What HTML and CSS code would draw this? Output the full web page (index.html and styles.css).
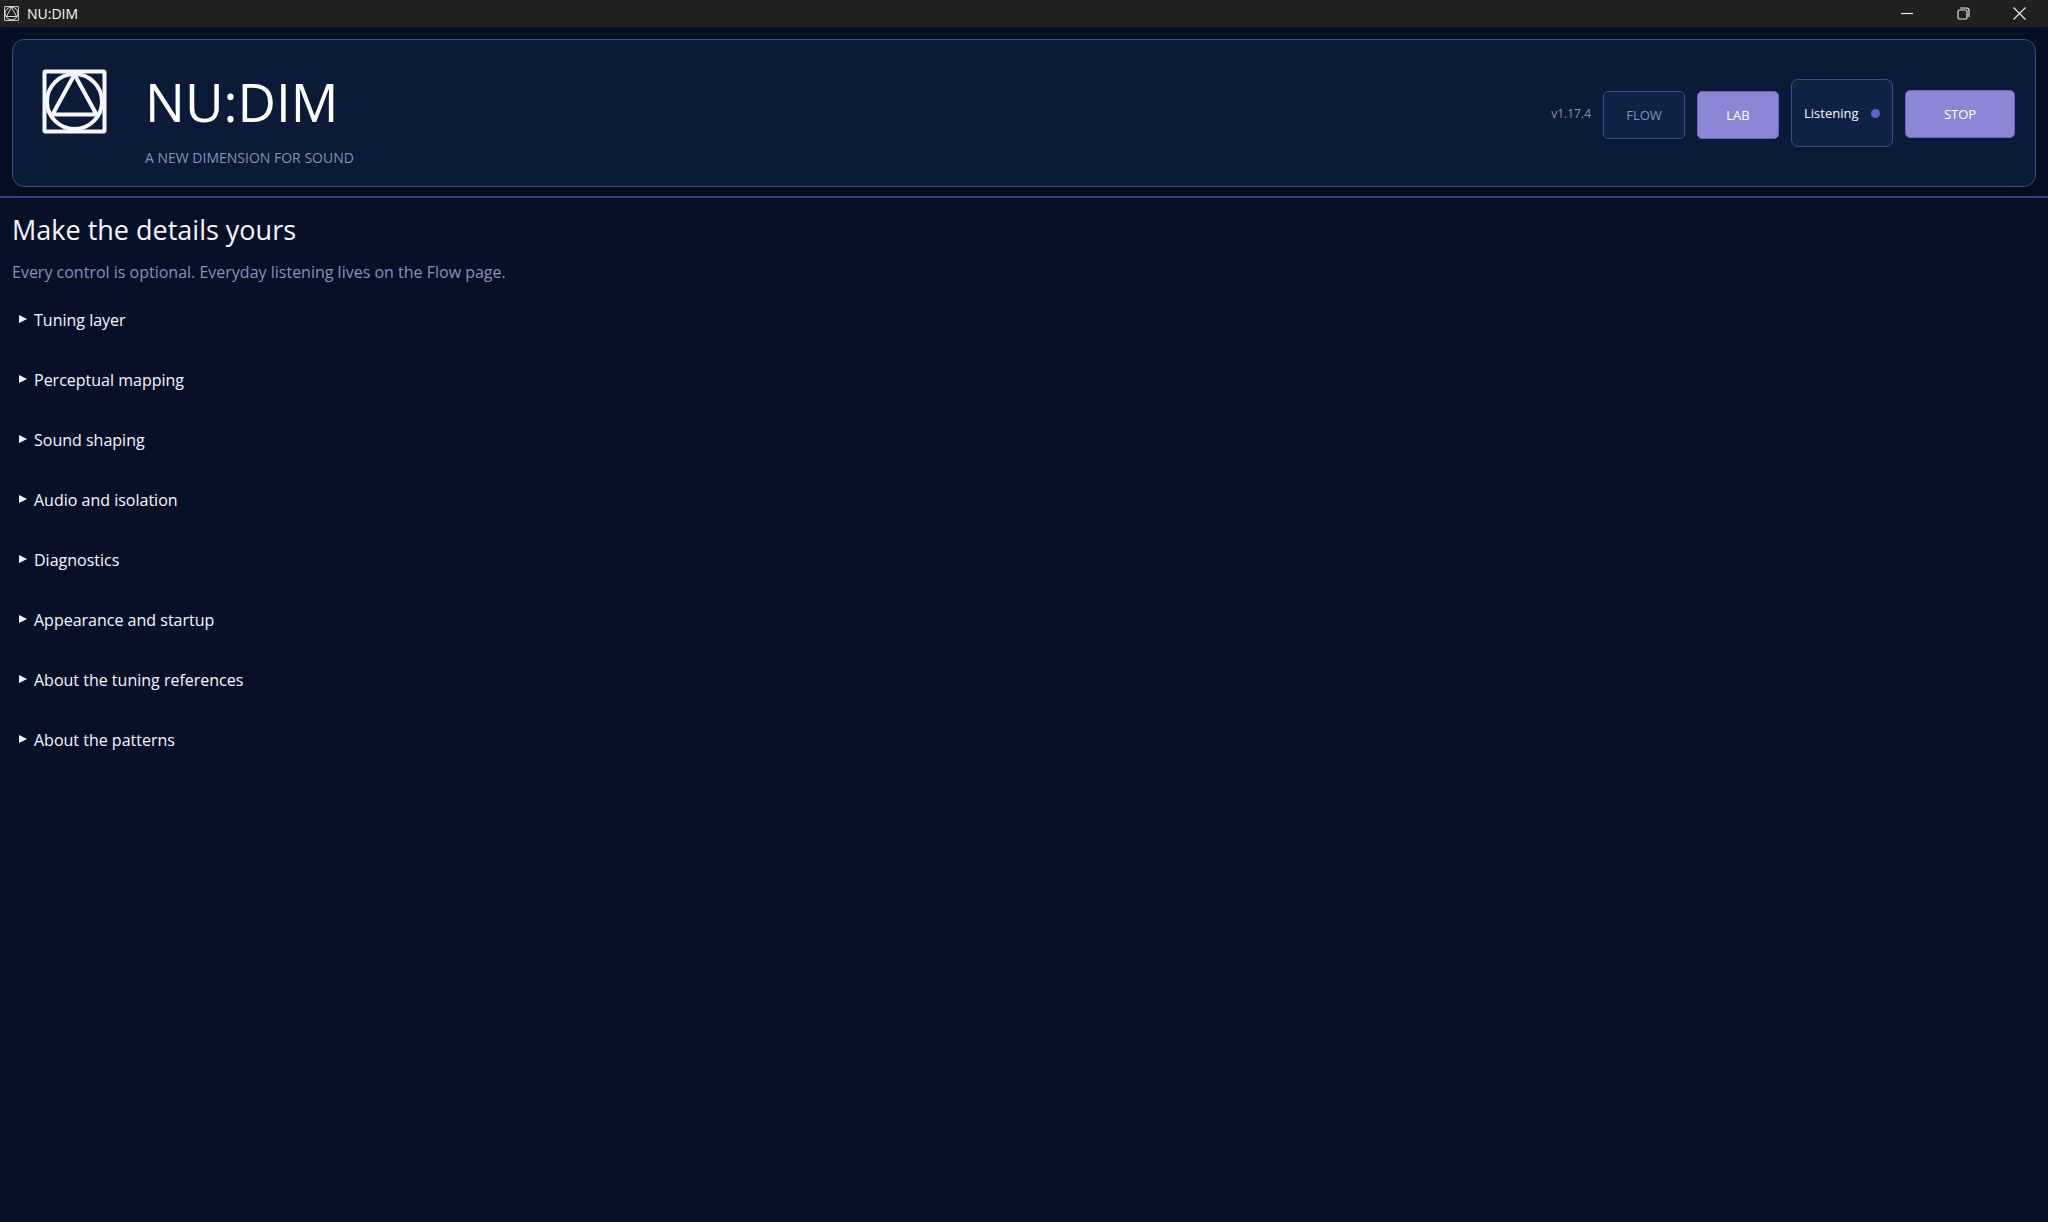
FILE: index.html
```html
<!DOCTYPE html>
<html lang="en">
<head>
    <meta charset="UTF-8">
    <meta name="viewport" content="width=device-width, initial-scale=1.0">
    <title>NU:DIM</title>
    <link rel="stylesheet" href="styles.css">
</head>
<body>
    <svg class="defs" aria-hidden="true">
        <symbol id="logo" viewBox="0 0 65 65">
            <rect x="2.5" y="2.5" width="60" height="60" rx="1"/>
            <circle cx="32.5" cy="32.5" r="27.5"/>
            <path d="M32.5 5.5 L54.5 45.5 H10.5 Z" stroke-linejoin="round"/>
        </symbol>
    </svg>

    <div class="titlebar">
        <svg class="titlebar-icon"><use href="#logo"/></svg>
        <span class="titlebar-name">NU:DIM</span>
        <div class="window-buttons">
            <button type="button" aria-label="Minimize">
                <svg viewBox="0 0 13 13"><path d="M0 6.5 H12"/></svg>
            </button>
            <button type="button" aria-label="Restore">
                <svg viewBox="0 0 13 13"><rect x="1" y="3" width="9" height="9" rx="1.5"/><path d="M3 1 H9.5 Q12 1 12 3.5 V10"/></svg>
            </button>
            <button type="button" aria-label="Close">
                <svg viewBox="0 0 13 13"><path d="M0.5 0.5 L12.5 12.5 M12.5 0.5 L0.5 12.5"/></svg>
            </button>
        </div>
    </div>

    <header class="header">
        <div class="header-card">
            <svg class="logo"><use href="#logo"/></svg>
            <div class="brand">
                <h1>NU:DIM</h1>
                <p>A NEW DIMENSION FOR SOUND</p>
            </div>
            <div class="controls">
                <span class="version">v1.17.4</span>
                <div class="tabs">
                    <button type="button" class="tab">FLOW</button>
                    <button type="button" class="tab active">LAB</button>
                </div>
                <div class="status">Listening <span class="dot"></span></div>
                <button type="button" class="stop">STOP</button>
            </div>
        </div>
    </header>

    <main>
        <h2>Make the details yours</h2>
        <p class="intro">Every control is optional. Everyday listening lives on the Flow page.</p>

        <details><summary>Tuning layer</summary></details>
        <details><summary>Perceptual mapping</summary></details>
        <details><summary>Sound shaping</summary></details>
        <details><summary>Audio and isolation</summary></details>
        <details><summary>Diagnostics</summary></details>
        <details><summary>Appearance and startup</summary></details>
        <details><summary>About the tuning references</summary></details>
        <details><summary>About the patterns</summary></details>
    </main>
</body>
</html>
```
FILE: styles.css
```css
:root {
    --bg: #061127;
    --surface: #0b1a37;
    --raised: #0f2145;
    --border: #35508e;
    --accent: #8986d5;
    --accent-border: #6a64c8;
    --text: #f7f8ff;
    --muted: #8491bd;
}

* {
    margin: 0;
    padding: 0;
    box-sizing: border-box;
}

body {
    background-color: var(--bg);
    color: var(--text);
    font-family: 'Open Sans', 'Noto Sans', sans-serif;
    font-size: 16px;
    min-height: 100vh;
}

button {
    font-family: inherit;
    cursor: pointer;
}

.defs {
    display: none;
}

.titlebar {
    display: flex;
    align-items: center;
    height: 27px;
    padding-left: 4px;
    background-color: #202020;
}

.titlebar-icon {
    width: 15px;
    height: 15px;
    fill: none;
    stroke: #e4e4e4;
    stroke-width: 4;
}

.titlebar-name {
    margin-left: 8px;
    font-size: 14px;
    line-height: 20px;
}

.window-buttons {
    display: flex;
    margin-left: auto;
    padding-right: 1px;
}

.window-buttons button {
    display: flex;
    align-items: center;
    justify-content: center;
    width: 56px;
    height: 27px;
    border: none;
    background: none;
}

.window-buttons svg {
    width: 13px;
    height: 13px;
    fill: none;
    stroke: #e8e8e8;
    stroke-width: 1.2;
}

.header {
    padding: 12px 12px 9px;
    border-bottom: 2px solid #2a4480;
    overflow: hidden;
}

.header-card {
    display: flex;
    align-items: center;
    min-height: 148px;
    padding: 0 20px 0 29px;
    background-color: var(--surface);
    border: 1px solid var(--border);
    border-radius: 12px;
    box-shadow: 0 6px 16px rgba(0, 0, 0, 0.5);
}

.logo {
    width: 65px;
    height: 65px;
    margin-bottom: 24px;
    fill: none;
    stroke: var(--text);
    stroke-width: 4;
}

.brand {
    margin-left: 38px;
    padding-top: 8px;
}

h1 {
    font-size: 53px;
    font-weight: 400;
    line-height: 70px;
    color: #fff;
}

.brand p {
    margin-top: 11px;
    font-size: 14px;
    line-height: 20px;
    color: var(--muted);
}

.controls {
    display: flex;
    align-items: center;
    gap: 12px;
    margin-left: auto;
}

.version {
    font-size: 12px;
    color: var(--muted);
}

.tabs {
    display: flex;
    gap: 12px;
    padding-top: 4px;
}

.tab,
.stop {
    height: 48px;
    border: 1px solid var(--border);
    border-radius: 5px;
    font-size: 13px;
}

.tab {
    width: 82px;
    background-color: var(--raised);
    color: var(--muted);
}

.tab.active,
.stop {
    background-color: var(--accent);
    border-color: var(--accent-border);
    color: #fff;
}

.stop {
    width: 110px;
    margin-top: 2px;
}

.status {
    display: flex;
    align-items: center;
    justify-content: space-between;
    width: 102px;
    height: 68px;
    padding: 0 12px;
    background-color: var(--raised);
    border: 1px solid var(--border);
    border-radius: 7px;
    font-size: 13px;
}

.dot {
    width: 9px;
    height: 9px;
    border-radius: 50%;
    background-color: #6460c8;
}

main {
    padding: 12px;
}

h2 {
    font-size: 27px;
    font-weight: 400;
    line-height: 40px;
}

.intro {
    margin-top: 10px;
    line-height: 24px;
    color: var(--muted);
}

details {
    margin-bottom: 36px;
}

.intro + details {
    margin-top: 24px;
}

summary {
    display: flex;
    align-items: center;
    gap: 7px;
    padding-left: 7px;
    line-height: 24px;
    cursor: pointer;
}

summary::before {
    content: "";
    margin-bottom: 3px;
    border-left: 8px solid var(--text);
    border-top: 4px solid transparent;
    border-bottom: 4px solid transparent;
}

details[open] summary::before {
    transform: rotate(90deg);
}
```
